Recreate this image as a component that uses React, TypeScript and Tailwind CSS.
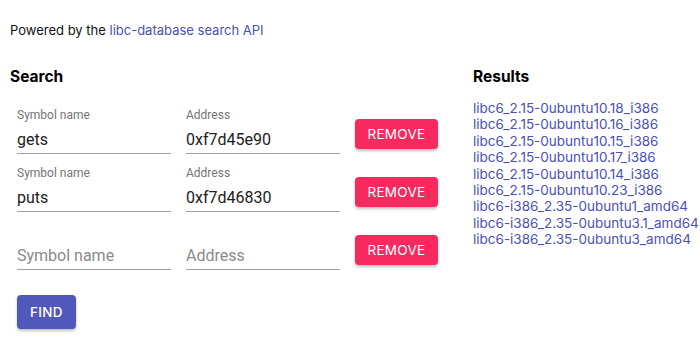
import { ReactNode } from "react";

const results = [
  "libc6_2.15-0ubuntu10.18_i386",
  "libc6_2.15-0ubuntu10.16_i386",
  "libc6_2.15-0ubuntu10.15_i386",
  "libc6_2.15-0ubuntu10.17_i386",
  "libc6_2.15-0ubuntu10.14_i386",
  "libc6_2.15-0ubuntu10.23_i386",
  "libc6-i386_2.35-0ubuntu1_amd64",
  "libc6-i386_2.35-0ubuntu3.1_amd64",
  "libc6-i386_2.35-0ubuntu3_amd64",
];

const rows = [
  { symbol: "gets", address: "0xf7d45e90" },
  { symbol: "puts", address: "0xf7d46830" },
  { symbol: "", address: "" },
];

const Field = ({ label, value }: { label: string; value: string }) => (
  <div className="flex w-[154px] flex-col border-b border-[#9e9e9e]">
    <div className="h-[14px] text-[12px] leading-[14px] text-[#757575]">
      {value ? label : ""}
    </div>
    <div
      className={`pt-[8px] pb-[4px] text-[16px] leading-[19px] ${
        value ? "text-[#212121]" : "text-[#8a8a8a]"
      }`}
    >
      {value || label}
    </div>
  </div>
);

const Heading = ({ children }: { children: ReactNode }) => (
  <h2 className="text-[15.5px] font-bold leading-[24px] text-black">{children}</h2>
);

const App = () => {
  return (
    <div className="min-h-[348px] bg-white px-[10px] pt-[20px] font-['Inter',sans-serif]">
      <p className="text-[13px] leading-[20px] text-[#111]">
        Powered by the{" "}
        <a href="#" className="text-[#4b50b5]">
          libc-database search API
        </a>
      </p>
      <div className="mt-[25px] flex">
        <div className="w-[463px] shrink-0">
          <Heading>Search</Heading>
          <div className="mt-[19px] flex flex-col gap-[12px] pl-[7px] font-['Roboto',sans-serif]">
            {rows.map((row, i) => (
              <div key={i} className="flex items-end gap-[15px]">
                <Field label="Symbol name" value={row.symbol} />
                <Field label="Address" value={row.address} />
                <button className="mb-[5px] h-[30px] w-[83px] rounded-[4px] bg-[#f62a5e] font-['Inter',sans-serif] text-[13.5px] tracking-[0.3px] text-white shadow-[0_2px_3px_rgba(0,0,0,0.25)]">
                  REMOVE
                </button>
              </div>
            ))}
            <div className="mt-[13px]">
              <button className="h-[34px] w-[59px] rounded-[4px] bg-[#5158bb] font-['Inter',sans-serif] text-[13.5px] font-medium tracking-[0.3px] text-white shadow-[0_2px_3px_rgba(0,0,0,0.25)]">
                FIND
              </button>
            </div>
          </div>
        </div>
        <div className="whitespace-nowrap">
          <Heading>Results</Heading>
          <ul className="mt-[11px] text-[13.5px] leading-[16.4px]">
            {results.map((r) => (
              <li key={r}>
                <a href="#" className="text-[#4b50b5]">
                  {r}
                </a>
              </li>
            ))}
          </ul>
        </div>
      </div>
    </div>
  );
};

export default App;
